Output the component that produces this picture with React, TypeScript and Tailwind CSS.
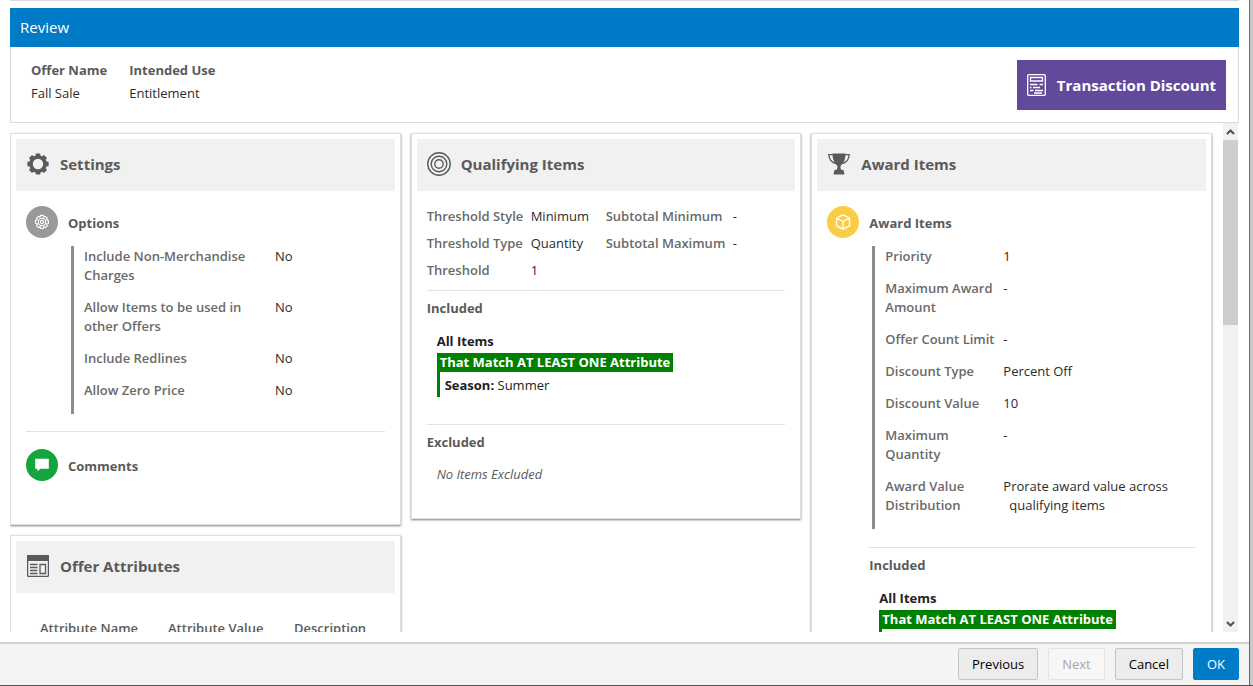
import type { ReactNode } from "react"

type Field = { label: string; value: ReactNode }

const options: Field[] = [
    { label: "Include Non-Merchandise Charges", value: "No" },
    { label: "Allow Items to be used in other Offers", value: "No" },
    { label: "Include Redlines", value: "No" },
    { label: "Allow Zero Price", value: "No" },
]

const awards: Field[] = [
    { label: "Priority", value: "1" },
    { label: "Maximum Award Amount", value: "-" },
    { label: "Offer Count Limit", value: "-" },
    { label: "Discount Type", value: "Percent Off" },
    { label: "Discount Value", value: "10" },
    { label: "Maximum Quantity", value: "-" },
    { label: "Award Value Distribution", value: <>Prorate award value across <span className="block pl-1.5">qualifying items</span></> },
]

const thresholds = [
    ["Threshold Style", "Minimum", "Subtotal Minimum", "-"],
    ["Threshold Type", "Quantity", "Subtotal Maximum", "-"],
    ["Threshold", "1", "", ""],
]

const GearIcon = () => (
    <svg viewBox="0 0 22 22" className="size-[22px]" fill="none" stroke="#5a5a5a">
        <circle cx="11" cy="11" r="7" strokeWidth="3.6" />
        {[0, 45, 90, 135, 180, 225, 270, 315].map((deg) => (
            <path key={deg} d="M8.4 3.8 8.800.4h4.400l.4 3.400z" fill="#5a5a5a" stroke="none" transform={`rotate(${deg} 11 11)`} />
        ))}
    </svg>
)

const TargetIcon = () => (
    <svg viewBox="0 0 24 24" className="size-6" fill="none" stroke="#5a5a5a" strokeWidth="1.4">
        <circle cx="12" cy="12" r="11.2" />
        <circle cx="12" cy="12" r="7.8" />
        <circle cx="12" cy="12" r="4.2" />
    </svg>
)

const TrophyIcon = () => (
    <svg viewBox="0 0 22 22" className="size-[22px]" fill="#5a5a5a">
        <path d="M4.500.5h13c-.1 5.500-1.500 9.800-4.700 11.900-.5 1.600-.3 3.200.5 4.300h1.500c1 .6 1.500 1.600 1.500 4.800H5.700c0-3.200.5-4.200 1.500-4.800h1.500c.8-1.100 1-2.700.5-4.300C6 10.300 4.600 6 4.500.5z" />
        <path d="M5 1.700H.8c.3 4.500 2.600 7.600 7 8.900M17 1.700h4.200c-.3 4.500-2.600 7.600-7 8.900" fill="none" stroke="#5a5a5a" strokeWidth="1.3" />
    </svg>
)

const LayoutIcon = () => (
    <svg viewBox="0 0 22 22" className="size-[22px]" fill="none" stroke="#5a5a5a" strokeWidth="1.3">
        <rect x=".6" y=".6" width="20.8" height="20.8" rx="1" />
        <path d="M0 1q0-1 1-1h20q1 0 1 1v5H0z" fill="#5a5a5a" stroke="none" />
        <path d="M3 9.500h7.500M3 12.500h7.500M3 15.500h7.500M3 18.500h7.500" />
        <path d="M13 9.500h5.500v9H13z" />
    </svg>
)

const ReceiptIcon = () => (
    <svg viewBox="0 0 19 22" className="h-[22px] w-[19px]" fill="none" stroke="#fff" strokeWidth="1.3">
        <rect x=".7" y=".7" width="17.6" height="20.6" rx="1" />
        <path d="M3.500 3.500h12v3.500h-12zM3 10.500h7.500M12.500 10.500H16M6 13.500h7M3 13.500h1.500M3 16.500h3.500M8 16.500h8M7 19h8" />
    </svg>
)

const SmallGearIcon = () => (
    <svg viewBox="0 0 16 16" className="size-4" fill="none" stroke="#fff" strokeWidth="1.1">
        <path d="M6.700 1.400h2.600l.5 1.700 1.600-.7 1.900 1.800-.8 1.600 1.900.7v2.900l-1.900.7.8 1.700-1.900 1.800-1.600-.8-.5 1.700H6.700l-.6-1.700-1.600.8-1.900-1.800.8-1.700-1.900-.7V6.500l1.900-.7-.8-1.600 1.900-1.800 1.600.7z" />
        <circle cx="8" cy="8" r="3.7" />
        <circle cx="8" cy="8" r="1.6" />
    </svg>
)

const BoxIcon = () => (
    <svg viewBox="0 0 16 16" className="size-4" fill="none" stroke="#fff" strokeWidth="1.3" strokeLinejoin="round">
        <path d="M8 .8 14.500 4v7.800L8 15.200l-6.500-3.400V4zM1.500 4 8 7.500 14.500 4M8 7.500v7.700" />
    </svg>
)

const CommentIcon = () => (
    <svg viewBox="0 0 16 14" className="h-3.5 w-4" fill="#fff">
        <path d="M1.200.8h13.600v10H6.200L3.500 13.500v-2.700H1.200z" />
    </svg>
)

const Card = ({ icon, title, children }: { icon: ReactNode; title: string; children: ReactNode }) => (
    <section className="border border-[#dfdfdf] bg-white p-[5px] shadow-[0_1px_2px_rgba(0,0,0,0.5)]">
        <div className="flex h-[52px] items-center gap-2.5 bg-[#f1f1f1] px-2.5 pb-0.5">
            <span className="flex w-6 shrink-0 justify-center">{icon}</span>
            <h2 className="text-[15px] leading-5 font-bold">{title}</h2>
        </div>
        {children}
    </section>
)

const Heading = ({ icon, color, title }: { icon: ReactNode; color: string; title: string }) => (
    <div className="flex items-center gap-2.5">
        <span className={`flex size-8 items-center justify-center rounded-full ${color}`}>{icon}</span>
        <h3 className="pt-0.5 font-bold">{title}</h3>
    </div>
)

const Fields = ({ items, labelWidth }: { items: Field[]; labelWidth: string }) => (
    <dl className="flex flex-col gap-[13px] border-l-3 border-[#8a8d8c] pt-px pb-3.5 pl-2.5">
        {items.map((item) => (
            <div key={item.label} className="flex">
                <dt className={`shrink-0 font-semibold text-[#6a6a6a] ${labelWidth}`}>{item.label}</dt>
                <dd className="text-[#2b2b2b]">{item.value}</dd>
            </div>
        ))}
    </dl>
)

const Included = () => (
    <>
        <h3 className="mt-2 font-bold">Included</h3>
        <div className="mt-3.5 pl-2.5 text-[#222]">
            <p className="font-bold">All Items</p>
            <p className="mt-0.5 w-fit bg-[#008000] px-[3px] font-bold text-white">That Match AT LEAST ONE Attribute</p>
            <p className="border-l-3 border-[#008000] pt-1 pb-0.5 pl-[5px]"><b>Season:</b> Summer</p>
        </div>
    </>
)

const App = () => {
    return (
        <div className="flex h-screen overflow-hidden border-b border-[#5c5254] bg-white font-['Open_Sans','Noto_Sans',sans-serif] text-[13px] leading-[19px] text-[#5a5a5a]">
            <div className="flex min-w-0 flex-1 flex-col">
                <main className="mx-2.5 flex min-h-0 flex-1 flex-col border-t border-[#d9d9d9] pb-2.5">
                    <h1 className="mt-[7px] shrink-0 bg-[#007bc8] px-2.5 py-[9px] text-[15px] leading-[21px] text-white">Review</h1>
                    <div className="flex h-[76px] shrink-0 items-start justify-between border border-t-0 border-[#d6dbe0] pr-3 pl-5">
                        <dl className="flex gap-[22px] pt-3.5">
                            <div>
                                <dt className="font-bold">Offer Name</dt>
                                <dd className="mt-1 text-[#2b2b2b]">Fall Sale</dd>
                            </div>
                            <div>
                                <dt className="font-bold">Intended Use</dt>
                                <dd className="mt-1 text-[#2b2b2b]">Entitlement</dd>
                            </div>
                        </dl>
                        <div className="mt-[13px] flex h-[50px] items-center gap-[11px] bg-[#62499a] px-2.5 text-[15px] font-bold text-white">
                            <ReceiptIcon />
                            Transaction Discount
                        </div>
                    </div>

                    <div className="flex min-h-0 flex-1">
                        <div className="grid min-w-0 flex-1 grid-cols-[39fr_39fr_40fr] items-start gap-2.5 overflow-hidden pt-2.5 pr-[11px]">
                            <div className="flex flex-col gap-2.5">
                                <Card icon={<GearIcon />} title="Settings">
                                    <div className="px-2.5 pt-[15px] pb-[38px]">
                                        <Heading icon={<SmallGearIcon />} color="bg-[#999999]" title="Options" />
                                        <div className="mt-2 ml-[45px]">
                                            <Fields items={options} labelWidth="w-[191px] pr-4" />
                                        </div>
                                        <hr className="my-[17px] border-[#e0e3e5]" />
                                        <Heading icon={<CommentIcon />} color="bg-[#14a53d]" title="Comments" />
                                    </div>
                                </Card>
                                <Card icon={<LayoutIcon />} title="Offer Attributes">
                                    <table className="mt-[26px] mb-4 ml-6 text-left">
                                        <thead>
                                            <tr>
                                                <th className="w-32 font-semibold">Attribute Name</th>
                                                <th className="w-[126px] font-semibold">Attribute Value</th>
                                                <th className="font-semibold">Description</th>
                                            </tr>
                                        </thead>
                                    </table>
                                </Card>
                            </div>

                            <Card icon={<TargetIcon />} title="Qualifying Items">
                                <div className="px-2.5 pt-3 pb-[29px]">
                                    <table className="text-left whitespace-nowrap">
                                        <tbody>
                                            {thresholds.map((row) => (
                                                <tr key={row[0]} className="h-[27px]">
                                                    <th className="w-[104px] font-semibold text-[#6a6a6a]">{row[0]}</th>
                                                    <td className="w-[75px] text-[#2b2b2b]">{row[1]}</td>
                                                    <th className="w-[127px] font-semibold text-[#6a6a6a]">{row[2]}</th>
                                                    <td className="text-[#2b2b2b]">{row[3]}</td>
                                                </tr>
                                            ))}
                                        </tbody>
                                    </table>
                                    <hr className="mt-1.5 border-[#e0e3e5]" />
                                    <Included />
                                    <hr className="mt-[27px] border-[#e0e3e5]" />
                                    <h3 className="mt-2 font-bold">Excluded</h3>
                                    <p className="mt-[13px] pl-2.5 italic">No Items Excluded</p>
                                </div>
                            </Card>

                            <Card icon={<TrophyIcon />} title="Award Items">
                                <div className="px-2.5 pt-[15px] pb-5">
                                    <Heading icon={<BoxIcon />} color="bg-[#fbcd46]" title="Award Items" />
                                    <div className="mt-2 ml-[45px]">
                                        <Fields items={awards} labelWidth="w-[118px] pr-1" />
                                    </div>
                                    <div className="ml-[42px]">
                                        <hr className="mt-[18px] border-[#e0e3e5]" />
                                        <Included />
                                    </div>
                                </div>
                            </Card>
                        </div>

                        <div className="mr-px flex w-[15px] shrink-0 flex-col bg-[#f1f1f1]">
                            <button aria-label="Scroll up" className="flex h-[17px] items-center justify-center">
                                <svg viewBox="0 0 9 6" className="h-1.5 w-[9px]" fill="none" stroke="#505050" strokeWidth="2"><path d="M1 5l3.500-3.500L8 5" /></svg>
                            </button>
                            <div className="h-[185px] bg-[#cdcdcd]" />
                            <button aria-label="Scroll down" className="mt-auto flex h-[17px] items-center justify-center">
                                <svg viewBox="0 0 9 6" className="h-1.5 w-[9px]" fill="none" stroke="#505050" strokeWidth="2"><path d="M1 1l3.500 3.500L8 1" /></svg>
                            </button>
                        </div>
                    </div>
                </main>

                <footer className="flex h-[43px] shrink-0 items-start justify-end gap-2.5 border-t-2 border-[#d0d0d0] bg-[#f4f4f4] px-2.5 pt-1 text-black">
                    <button className="h-8 rounded-xs border border-[#c4c4c4] bg-[#ececec] px-[13px]">Previous</button>
                    <button disabled className="h-8 rounded-xs border border-[#e4e4e4] bg-[#f7f7f7] px-[13px] text-[#a8a8a8]">Next</button>
                    <button className="h-8 rounded-xs border border-[#c4c4c4] bg-[#ececec] px-[13px]">Cancel</button>
                    <button className="h-8 rounded-xs border border-[#007bc8] bg-[#007bc8] px-[13px] text-white">OK</button>
                </footer>
            </div>
            <div className="w-1 shrink-0 border-l border-[#6a6a6a] bg-[#c9c9c9]" />
        </div>
    )
}

export default App
